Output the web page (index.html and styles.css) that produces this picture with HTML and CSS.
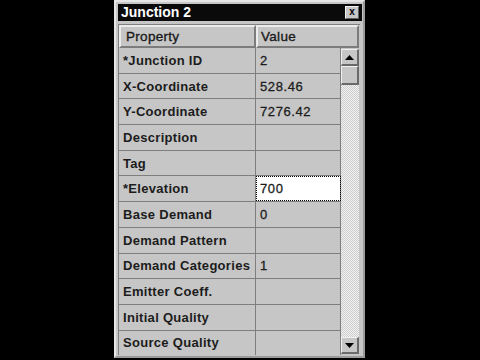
FILE: index.html
```html
<!DOCTYPE html>
<html>
<head>
<meta charset="utf-8">
<link rel="stylesheet" href="styles.css">
</head>
<body>
<div class="window">
  <div class="titlebar">
    <span class="title">Junction 2</span>
    <span class="close">x</span>
  </div>
  <div class="grid">
    <div class="head">
      <div class="hcell hprop">Property</div>
      <div class="hcell hval">Value</div>
    </div>
    <div class="body">
      <div class="rows">
        <div class="row"><div class="c prop">*Junction ID</div><div class="c val">2</div></div>
        <div class="row"><div class="c prop">X-Coordinate</div><div class="c val">528.46</div></div>
        <div class="row"><div class="c prop">Y-Coordinate</div><div class="c val">7276.42</div></div>
        <div class="row"><div class="c prop">Description</div><div class="c val"></div></div>
        <div class="row"><div class="c prop">Tag</div><div class="c val"></div></div>
        <div class="row"><div class="c prop">*Elevation</div><div class="c val edit">700</div></div>
        <div class="row"><div class="c prop">Base Demand</div><div class="c val">0</div></div>
        <div class="row"><div class="c prop">Demand Pattern</div><div class="c val"></div></div>
        <div class="row"><div class="c prop">Demand Categories</div><div class="c val">1</div></div>
        <div class="row"><div class="c prop">Emitter Coeff.</div><div class="c val"></div></div>
        <div class="row"><div class="c prop">Initial Quality</div><div class="c val"></div></div>
        <div class="row"><div class="c prop">Source Quality</div><div class="c val"></div></div>
      </div>
      <div class="scroll">
        <div class="sbtn"><svg width="9" height="5" viewBox="0 0 9 5"><path d="M4.5 0 L9 5 L0 5 Z" fill="#000"/></svg></div>
        <div class="thumb"></div>
        <div class="track"></div>
        <div class="sbtn"><svg width="9" height="5" viewBox="0 0 9 5"><path d="M0 0 L9 0 L4.5 5 Z" fill="#000"/></svg></div>
      </div>
    </div>
  </div>
</div>
</body>
</html>
```
FILE: styles.css
```css
html, body {
  margin: 0;
  padding: 0;
  background: #000;
  width: 480px;
  height: 360px;
  overflow: hidden;
}
.window {
  margin-left: 114px;
  width: 251px;
  height: 358px;
  box-sizing: border-box;
  background: #c6c6c6;
  border-top: 2px solid #e6e6e6;
  border-left: 2px solid #e6e6e6;
  border-right: 2px solid #9a9a9a;
  border-bottom: 2px solid #9a9a9a;
  padding: 2px 1px 2px 2px;
  display: flex;
  flex-direction: column;
  font-family: "Liberation Sans", Arial, sans-serif;
}
.titlebar {
  height: 17px;
  background: #0a0a0a;
  display: flex;
  align-items: center;
  justify-content: space-between;
  padding: 0 3px 0 3px;
  flex: none;
}
.title {
  color: #fff;
  font-weight: bold;
  font-size: 14px;
  line-height: 17px;
}
.close {
  width: 12px;
  height: 11px;
  background: #c6c6c6;
  border-top: 1px solid #f0f0f0;
  border-left: 1px solid #f0f0f0;
  border-right: 1px solid #606060;
  border-bottom: 1px solid #606060;
  font-size: 10px;
  font-weight: bold;
  line-height: 10px;
  text-align: center;
  color: #000;
}
.grid {
  margin-top: 3px;
  width: 242px;
  flex: none;
  height: 331px;
  border-top: 1px solid #808080;
  border-left: 1px solid #808080;
  display: flex;
  flex-direction: column;
  overflow: hidden;
  box-sizing: border-box;
}
.head {
  display: flex;
  height: 23px;
  flex: none;
}
.hcell {
  box-sizing: border-box;
  height: 23px;
  background: #c6c6c6;
  border-top: 2px solid #ececec;
  border-left: 2px solid #ececec;
  border-right: 2px solid #7c7c7c;
  border-bottom: 2px solid #7c7c7c;
  font-size: 13.5px;
  letter-spacing: 0.3px;
  color: #1a1a1a;
  -webkit-text-stroke: 0.35px #1a1a1a;
  line-height: 19px;
  padding-left: 5px;
}
.hprop { width: 137px; }
.hval { width: 103px; padding-left: 3px; }
.body {
  display: flex;
  flex: 1;
  min-height: 0;
}
.rows {
  width: 222px;
  display: flex;
  flex-direction: column;
  overflow: hidden;
}
.row {
  display: flex;
  height: 25.7px;
  flex: none;
  box-sizing: border-box;
  border-bottom: 1px solid #7e7e7e;
}
.c {
  box-sizing: border-box;
  font-size: 13px;
  font-weight: bold;
  letter-spacing: 0.3px;
  color: #1c1c1c;
  display: flex;
  align-items: center;
  background: #c6c6c6;
}
.prop {
  width: 137px;
  padding-left: 4px;
  border-right: 1px solid #7e7e7e;
}
.val {
  width: 85px;
  padding-left: 4px;
  border-right: 1px solid #7e7e7e;
  font-weight: normal;
  -webkit-text-stroke: 0.3px #1c1c1c;
  letter-spacing: 0.6px;
}
.edit {
  background: #fff;
  outline: 1px dotted #000;
  outline-offset: -1px;
}
.scroll {
  width: 18px;
  display: flex;
  flex-direction: column;
  padding: 1px 0 1px 0;
  box-sizing: border-box;
}
.sbtn, .thumb {
  height: 17px;
  box-sizing: border-box;
  background: #c6c6c6;
  border-top: 1px solid #f0f0f0;
  border-left: 1px solid #f0f0f0;
  border-right: 2px solid #6a6a6a;
  border-bottom: 2px solid #6a6a6a;
  display: flex;
  align-items: center;
  justify-content: center;
  flex: none;
}
.thumb { height: 19px; }
.track {
  flex: 1;
  background: repeating-conic-gradient(#f4f4f4 0 25%, #cacaca 0 50%) 0 0 / 2px 2px;
}
```
